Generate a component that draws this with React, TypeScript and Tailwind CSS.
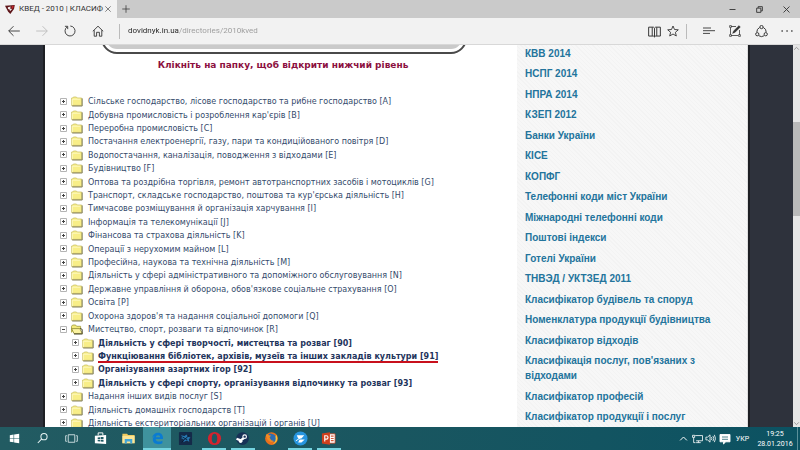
import type { ReactNode } from "react";

type Row = {
  code: string;
  title: string;
  child?: boolean;
  open?: boolean;
  marked?: boolean;
};

const rows: Row[] = [
  { code: "A", title: "Сільське господарство, лісове господарство та рибне господарство" },
  { code: "B", title: "Добувна промисловість і розроблення кар'єрів" },
  { code: "C", title: "Переробна промисловість" },
  { code: "D", title: "Постачання електроенергії, газу, пари та кондиційованого повітря" },
  { code: "E", title: "Водопостачання, каналізація, поводження з відходами" },
  { code: "F", title: "Будівництво" },
  { code: "G", title: "Оптова та роздрібна торгівля, ремонт автотранспортних засобів і мотоциклів" },
  { code: "H", title: "Транспорт, складське господарство, поштова та кур'єрська діяльність" },
  { code: "I", title: "Тимчасове розміщування й організація харчування" },
  { code: "J", title: "Інформація та телекомунікації" },
  { code: "K", title: "Фінансова та страхова діяльність" },
  { code: "L", title: "Операції з нерухомим майном" },
  { code: "M", title: "Професійна, наукова та технічна діяльність" },
  { code: "N", title: "Діяльність у сфері адміністративного та допоміжного обслуговування" },
  { code: "O", title: "Державне управління й оборона, обов'язкове соціальне страхування" },
  { code: "P", title: "Освіта" },
  { code: "Q", title: "Охорона здоров'я та надання соціальної допомоги" },
  { code: "R", title: "Мистецтво, спорт, розваги та відпочинок", open: true },
  { code: "90", title: "Діяльність у сфері творчості, мистецтва та розваг", child: true },
  { code: "91", title: "Функціювання бібліотек, архівів, музеїв та інших закладів культури", child: true, marked: true },
  { code: "92", title: "Організування азартних ігор", child: true },
  { code: "93", title: "Діяльність у сфері спорту, організування відпочинку та розваг", child: true },
  { code: "S", title: "Надання інших видів послуг" },
  { code: "T", title: "Діяльність домашніх господарств" },
  { code: "U", title: "Діяльність екстериторіальних організацій і органів" },
];

const directories = [
  "КВВ 2014",
  "НСПГ 2014",
  "НПРА 2014",
  "КЗЕП 2012",
  "Банки України",
  "КІСЕ",
  "КОПФГ",
  "Телефонні коди міст України",
  "Міжнародні телефонні коди",
  "Поштові індекси",
  "Готелі України",
  "ТНВЭД / УКТЗЕД 2011",
  "Класифікатор будівель та споруд",
  "Номенклатура продукції будівництва",
  "Класифікатор відходів",
  "Класифікація послуг, пов'язаних з відходами",
  "Класифікатор професій",
  "Класифікатор продукції і послуг",
];

function Icon({ size = 12, children }: { size?: number; children: ReactNode }) {
  return (
    <svg
      width={size}
      height={size}
      viewBox="0 0 12 12"
      fill="none"
      stroke="currentColor"
      strokeWidth="0.9"
      className="shrink-0"
      aria-hidden="true"
    >
      {children}
    </svg>
  );
}

function IconButton({ label, className = "", children }: { label: string; className?: string; children: ReactNode }) {
  return (
    <button aria-label={label} className={`flex shrink-0 items-center justify-center ${className}`}>
      {children}
    </button>
  );
}

function Folder({ open }: { open?: boolean }) {
  return (
    <svg width="12" height="11" viewBox="0 0 12 11" className="shrink-0" aria-hidden="true">
      {open ? (
        <>
          <path d="M.5 8.500V2.300L1.600 1h3l1 1.300h4V5" fill="#f3ea7c" stroke="#a09a3c" strokeWidth=".8" />
          <path d="M.6 4.600h8.200l2.600 5H3z" fill="#fbf3a0" stroke="#8a8430" strokeWidth=".8" />
          <path d="M9.200 4.400l2 1v4.200M3 10h8.400" stroke="#3c3a20" strokeWidth=".9" fill="none" />
        </>
      ) : (
        <>
          <path d="M.6 9.400V2h1l.8-1h3l.9 1h4.300v7.400z" fill="#f8ee88" stroke="#cbc26a" strokeWidth=".8" />
          <path d="M1.300 9V3.200h7.700" stroke="#fffbd0" strokeWidth=".8" fill="none" />
          <path d="M11.200 2.400V10H1.200" stroke="#77734a" strokeWidth=".9" fill="none" />
        </>
      )}
    </svg>
  );
}

function TreeRow({ row }: { row: Row }) {
  return (
    <li className={`flex min-h-0 flex-1 items-center ${row.child ? "pl-3" : ""}`}>
      <IconButton label={`${row.open ? "Згорнути" : "Розгорнути"} ${row.code}`} className="w-2">
        <svg width="8" height="8" viewBox="0 0 8 8" fill="none" aria-hidden="true">
          <path d="M.5.5h6v6h-6z" stroke="#b4b4b4" fill="#fff" />
          <path d={row.open ? "M2 3.500h3" : "M2 3.500h3M3.500 2v3"} stroke="#444" />
        </svg>
      </IconButton>
      <span className={row.child ? "pr-1 pl-[2px]" : "pr-[5px] pl-[3px]"}>
        <Folder open={row.open} />
      </span>
      <a
        href={`#${row.code}`}
        className={`relative whitespace-nowrap text-[8px] leading-[13px] ${
          row.child ? "font-bold text-[#1f355c]" : "text-[#344a6b]"
        }`}
      >
        {row.title} [{row.code}]
        {row.marked && <span className="absolute inset-x-0 bottom-0 h-[2px] bg-[#c8101c]" />}
      </a>
    </li>
  );
}

function TitleBar() {
  return (
    <div className="flex h-[18px] shrink-0 items-stretch bg-[#cacaca] text-[#333]">
      <div className="flex w-[117px] items-center bg-[#f2f2f2] pl-[5px]">
        <svg width="10" height="9" viewBox="0 0 10 9" className="shrink-0" aria-hidden="true">
          <path d="M0 .8L9.800 0 9 4 5.300 9 3 6.500z" fill="#5e1519" />
          <path d="M2.800 2.200l3-.7-.8 2 2.200.6L5 6.300 4.600 4.600 3 4.100z" fill="#f4e9e9" />
          <path d="M6.800 1l2-.2-.7 3-1.600-.5z" fill="#c3262c" />
        </svg>
        <span className="flex-1 pl-1 text-[8px] leading-3 whitespace-nowrap">КВЕД - 2010 | КЛАСИФ</span>
        <IconButton label="Закрити вкладку" className="mr-1 w-[10px]">
          <Icon size={8}>
            <path d="M2 2l8 8M10 2l-8 8" />
          </Icon>
        </IconButton>
      </div>
      <IconButton label="Нова вкладка" className="w-[18px]">
        <Icon size={10}>
          <path d="M6 1.500v9M1.500 6h9" />
        </Icon>
      </IconButton>
      <div className="ml-auto flex">
        <IconButton label="Згорнути" className="w-[27px]">
          <Icon size={9}>
            <path d="M2 6h8" strokeWidth="1.200" />
          </Icon>
        </IconButton>
        <IconButton label="Відновити" className="w-[27px]">
          <Icon size={9}>
            <path d="M2.200 4.200h5.600v5.600H2.200zM4.200 4V2.200h5.600v5.600H8" strokeWidth="1.200" />
          </Icon>
        </IconButton>
        <IconButton label="Закрити" className="w-[27px]">
          <Icon size={9}>
            <path d="M2 2l8 8M10 2l-8 8" strokeWidth="1.200" />
          </Icon>
        </IconButton>
      </div>
    </div>
  );
}

function ToolBar() {
  return (
    <div className="flex h-[27px] shrink-0 items-center border-b border-[#d8d8d8] bg-[#f2f2f2] text-[#333]">
      <IconButton label="Назад" className="w-7">
        <Icon>
          <path d="M11.800 6H.8M5.500 1.200L.7 6l4.800 4.800" />
        </Icon>
      </IconButton>
      <IconButton label="Вперед" className="w-7 text-[#bbb]">
        <Icon>
          <path d="M.2 6h11M6.500 1.200L11.300 6l-4.800 4.800" />
        </Icon>
      </IconButton>
      <IconButton label="Оновити" className="w-7">
        <Icon>
          <path d="M3.300 1.800a5 5 0 1 0 3-.8M.9 1.300h2.800v2.800" />
        </Icon>
      </IconButton>
      <IconButton label="Додому" className="w-7">
        <Icon>
          <path d="M.8 6.300L6 1.200l5.200 5.100M2.200 5.200v6h2.400V7.300h2.800v3.900h2.400v-6" />
        </Icon>
      </IconButton>
      <div className="ml-[7px] h-[15px] w-px bg-[#bbb]" />
      <input
        aria-label="Адреса"
        defaultValue="dovidnyk.in.ua/directories/2010kved"
        className="ml-2 min-w-0 flex-1 bg-[linear-gradient(90deg,#222_51px,#999_51px)] bg-clip-text text-[8px] leading-3 text-transparent outline-none"
      />
      <IconButton label="Режим читання" className="w-[18px]">
        <Icon size={13}>
          <path d="M.6 2h4.400l1 .9 1-.9h4.400v8.200H7l-1 .8-1-.8H.6zM6 3v8M3.900 2.200v7.900M8.100 2.200v7.900" />
        </Icon>
      </IconButton>
      <IconButton label="Додати до вибраного" className="w-5">
        <Icon>
          <path d="M6 1l1.500 3.500 3.800.3-2.900 2.500.9 3.700L6 9l-3.300 2 .9-3.700L.7 4.800l3.800-.3z" />
        </Icon>
      </IconButton>
      <div className="mx-[3px] h-[15px] w-px bg-[#bbb]" />
      <div className="flex pl-[6px]">
        <IconButton label="Центр" className="w-[26px]">
          <Icon>
            <path d="M0 3h8M0 5.700h12M0 8.400h7" />
          </Icon>
        </IconButton>
        <IconButton label="Створити нотатку" className="w-[26px]">
          <Icon>
            <path d="M2 1.500h5M10.500 5v5M2 10.500h7M1.500 2.500v7" strokeWidth=".8" />
            <path d="M.6.6h1.800v1.800H.6zM.6 9.600h1.800v1.800H.6zM9.600 9.600h1.800v1.800H9.600z" strokeWidth=".7" />
            <path d="M3.500 8.500l1-2.600L10 .6l1.400 1.400L6 7.400z" fill="currentColor" strokeWidth=".3" />
          </Icon>
        </IconButton>
        <IconButton label="Поділитися" className="w-[26px]">
          <Icon size={13}>
            <path d="M4.300 2.300A4.500 4.500 0 0 0 1.700 6.600M7.700 2.300a4.500 4.500 0 0 1 2.600 4.300M3.500 9.900a4.500 4.500 0 0 0 5 0" />
            <circle cx="6" cy="1.900" r="1.500" />
            <circle cx="2.100" cy="8.500" r="1.500" />
            <circle cx="9.900" cy="8.500" r="1.500" />
          </Icon>
        </IconButton>
        <IconButton label="Додатково" className="w-[26px]">
          <Icon>
            <path d="M.5 6h1.300M5.400 6h1.300M10.200 6h1.300" strokeWidth="1.300" />
          </Icon>
        </IconButton>
      </div>
    </div>
  );
}

const apps: { name: string; running?: boolean; active?: boolean; art: ReactNode }[] = [
  {
    name: "Пуск",
    art: <path d="M3 4.400l4-.6v3.800H3zM7.600 3.700L13 3v4.600H7.600zM3 8.200h4V12l-4-.6zM7.600 8.200H13V13l-5.400-.8z" fill="#fff" />,
  },
  {
    name: "Пошук",
    art: (
      <g fill="none" stroke="#e8f4f4" strokeWidth="1.100">
        <circle cx="9.600" cy="6" r="3.300" />
        <path d="M7.200 8.400L3 12.800" />
      </g>
    ),
  },
  {
    name: "Подання завдань",
    art: <path d="M4.500 4h7v8h-7zM3 5H1.800v6H3M13 5h1.200v6H13" fill="none" stroke="#cfe0e2" />,
  },
  {
    name: "Магазин",
    art: (
      <>
        <path d="M2 5l12-.8v9.600L2 13z" fill="#fff" />
        <path d="M5.500 4.600V2h5v2.400" fill="none" stroke="#fff" />
        <path d="M5 6.800l2.600-.2v2H5zM8.200 6.500l3-.2v2.300h-3zM5 9.200h2.600v2L5 11zM8.200 9.200h3v2.300l-3-.2z" fill="#1d5963" />
      </>
    ),
  },
  {
    name: "Провідник",
    art: (
      <>
        <path d="M1.500 3h5l1 1.200h7V13h-13z" fill="#f0ca5e" />
        <path d="M1.500 5.200h13V13h-13z" fill="#fbe596" />
        <path d="M4 13.300V8.500h8v4.800H9.800v-2.200H6.200v2.200z" fill="#42a5d8" />
      </>
    ),
  },
  {
    name: "Edge",
    active: true,
    running: true,
    art: (
      <path
        d="M2.200 7.600C2.800 4 5.400 1.900 8.600 1.900c3.600 0 5.500 2.700 5.300 6.700H6c.2 1.900 1.800 2.700 3.700 2.700 1.300 0 2.400-.3 3.500-.9v2.700c-1.200.7-2.700 1-4.300 1-3.600 0-5.900-2-5.900-5 0-2 1-3.500 2.800-4.400C4.300 5.100 3 6.200 2.200 7.600zM6.100 6.600h4.700c0-1.300-.8-2.100-2.200-2.100-1.300 0-2.200.8-2.500 2.100z"
        fill="#0a7bd2"
      />
    ),
  },
  {
    name: "Гра",
    art: (
      <>
        <rect x="1" y="1" width="14" height="14" rx="1" fill="#142a49" />
        <path d="M3 4.500l4 .7 2-1.500 1.500 2.300 2.800 1-1.800 1.700.6 2.800-3-1.500-3.500 2 .6-3.200L3 7.500l2-.8z" fill="#2677b0" />
        <path d="M4 12l8-7.500M5 6.500l5 3" stroke="#07152c" strokeWidth=".9" />
      </>
    ),
  },
  {
    name: "Opera",
    running: true,
    art: (
      <>
        <ellipse cx="8" cy="8" rx="7" ry="7" fill="#d3232e" />
        <ellipse cx="8" cy="8" rx="2.900" ry="5" fill="#1f5761" />
      </>
    ),
  },
  {
    name: "Steam",
    running: true,
    art: (
      <>
        <circle cx="8" cy="8" r="6.800" fill="#173157" />
        <path d="M1.600 8.200L6 10l3.500-2.500" stroke="#fff" strokeWidth="2.400" fill="none" />
        <circle cx="6" cy="10.800" r="1.900" fill="#fff" />
        <circle cx="10.300" cy="6" r="2.500" fill="#fff" />
        <circle cx="10.300" cy="6" r="1.300" fill="#173157" />
      </>
    ),
  },
  {
    name: "Firefox",
    art: (
      <>
        <circle cx="8" cy="8" r="6.800" fill="#e8701d" />
        <path d="M5 3.200a6 6 0 0 1 8.200 6.300C12 12 9 12 7.500 10.500L5 8z" fill="#2d6db4" />
        <path d="M13 4c2.400 3.700 1 9-4 10.300 3.200-2.300 4-5.400 3.200-8.300z" fill="#f8c337" />
        <path d="M2 5l1-2 2 1.500 2.500.4-1.600 2 1.800 3 3 .7c-3 2.600-7.300 0-7.700-3.600z" fill="#f28b23" />
      </>
    ),
  },
  {
    name: "Словник",
    running: true,
    art: (
      <>
        <circle cx="8" cy="8" r="7.500" fill="#2795df" />
        <path d="M4 4.500h8L9 8H5.500zM7 9h5.500L9 12.300H5.500z" fill="#fff" />
        <path d="M3 10.500l6-4" stroke="#fff" />
      </>
    ),
  },
  {
    name: "PowerPoint",
    running: true,
    art: (
      <>
        <path d="M8 3h7v10H8z" fill="#fff" stroke="#c9401f" strokeWidth=".8" />
        <path d="M10.500 5.500h3M10.500 8h3M10.500 10.300h3" stroke="#d65a3a" strokeWidth="1.200" />
        <path d="M1 2.700L9.500 1.300v13.400L1 13.300z" fill="#cf3f1d" />
        <path d="M4 11.300V5h1.700a1.700 1.700 0 0 1 0 3.600H4" fill="none" stroke="#fff" strokeWidth="1.200" />
      </>
    ),
  },
];

function TaskBar() {
  return (
    <footer className="flex h-[23px] shrink-0 items-stretch bg-linear-to-r from-[#225b62] via-[#195660] to-[#0b5262] text-white">
      <nav aria-label="Програми" className="flex w-[343px]">
        {apps.map((app) => (
          <button
            key={app.name}
            aria-label={app.name}
            className={`flex flex-1 flex-col items-center justify-end ${app.active ? "bg-[#3f929d]" : ""}`}
          >
            <svg width="15" height="15" viewBox="0 0 16 16" aria-hidden="true">
              {app.art}
            </svg>
            <span
              className={`mt-[2px] h-[2px] ${app.active ? "w-full" : "w-6"} ${app.running ? "bg-[#75d3df]" : ""}`}
            />
          </button>
        ))}
      </nav>
      <div className="ml-auto flex items-center">
        <IconButton label="Приховані піктограми" className="w-[14px]">
          <Icon size={9}>
            <path d="M1.500 8.500L6 4l4.500 4.500" strokeWidth="1.300" />
          </Icon>
        </IconButton>
        <IconButton label="Мережа" className="w-[14px]">
          <Icon size={11}>
            <path d="M3.500 2.800h8v5.700h-7M7 8.500v2M4.500 10.500h5M.6 2.500h2.300v2.300H.6zM1.800 5v5.500h2" />
          </Icon>
        </IconButton>
        <IconButton label="Гучність" className="w-3">
          <Icon size={11}>
            <path d="M1 4.500h1.800L5.500 2v8L2.800 7.500H1zM7 4.500q1 1.500 0 3M8.600 3.200q2 2.800 0 5.600M10.200 2q2.600 4 0 8" />
          </Icon>
        </IconButton>
        <IconButton label="Сповіщення" className="w-[18px]">
          <Icon size={12}>
            <path d="M1 1.500h10v7.300H6.800L4.500 11V8.800H1z" fill="#fff" stroke="#fff" />
            <path d="M3 4h6M3 6.300h6" stroke="#3b7480" />
          </Icon>
        </IconButton>
        <button className="w-[17px] text-[7px] leading-3">УКР</button>
        <button className="ml-1 w-[40px] text-center text-[7px] leading-[10px] whitespace-nowrap">
          19:25
          <br />
          28.01.2016
        </button>
        <div className="mr-[2px] ml-[2px] h-full w-px bg-[#5a909a]" />
      </div>
    </footer>
  );
}

export default function App() {
  return (
    <div className="flex h-screen flex-col overflow-hidden bg-white font-[Roboto,'Noto_Sans',sans-serif]">
      <TitleBar />
      <ToolBar />

      <div className="flex min-h-0 flex-1 bg-[#2e323c]">
        <div className="w-[45px] shrink-0 border-r-2 border-[#1d1f24]" />

        <main className="flex min-w-0 flex-1 flex-col bg-white font-['DejaVu_Sans',Verdana,sans-serif]">
          <div className="ml-[56px] mr-[50px] flex h-[9px] shrink-0 items-end overflow-hidden">
            <div className="h-8 w-full rounded-[16px] border-2 border-[#4a4a4a] bg-white p-[3px]">
              <div className="h-full rounded-[12px] bg-[#cacaca]" />
            </div>
          </div>
          <h1 className="pt-1 pl-1 text-center text-[9px] leading-[14px] font-bold whitespace-nowrap text-[#8c1040]">
            Клікніть на папку, щоб відкрити нижчий рівень
          </h1>
          <ul className="mt-[23px] -mb-[3px] flex min-h-0 flex-1 flex-col pl-[15px]">
            {rows.map((row) => (
              <TreeRow key={row.code} row={row} />
            ))}
          </ul>
        </main>

        <aside className="flex w-[231px] shrink-0 flex-col border-r border-[#ddd] bg-[repeating-linear-gradient(45deg,#f7f7f7_0px,#f7f7f7_2px,#f3f3f3_2px,#f3f3f3_3px)] pt-px pr-[30px] pb-[3px] pl-2 font-['Liberation_Sans',Arial,sans-serif]">
          <ul className="flex flex-1 flex-col justify-between">
            {directories.map((name) => (
              <li key={name} className="text-[10px] leading-[15px] font-bold text-[#23749c]">
                <a href="#directory">{name}</a>
              </li>
            ))}
          </ul>
        </aside>

        <div className="w-[45px] shrink-0 border-l-2 border-[#1d1f24]" />

        <div className="flex w-[7px] shrink-0 flex-col items-center bg-[#e6e6e6] text-[#888]">
          <Icon size={7}>
            <path d="M2 8l4-4 4 4" strokeWidth="1.400" />
          </Icon>
          <div className="mt-[70px] h-[94px] w-full bg-[#bababa]" />
          <span className="mt-auto">
            <Icon size={7}>
              <path d="M2 4l4 4 4-4" strokeWidth="1.400" />
            </Icon>
          </span>
        </div>
      </div>

      <TaskBar />
    </div>
  );
}
